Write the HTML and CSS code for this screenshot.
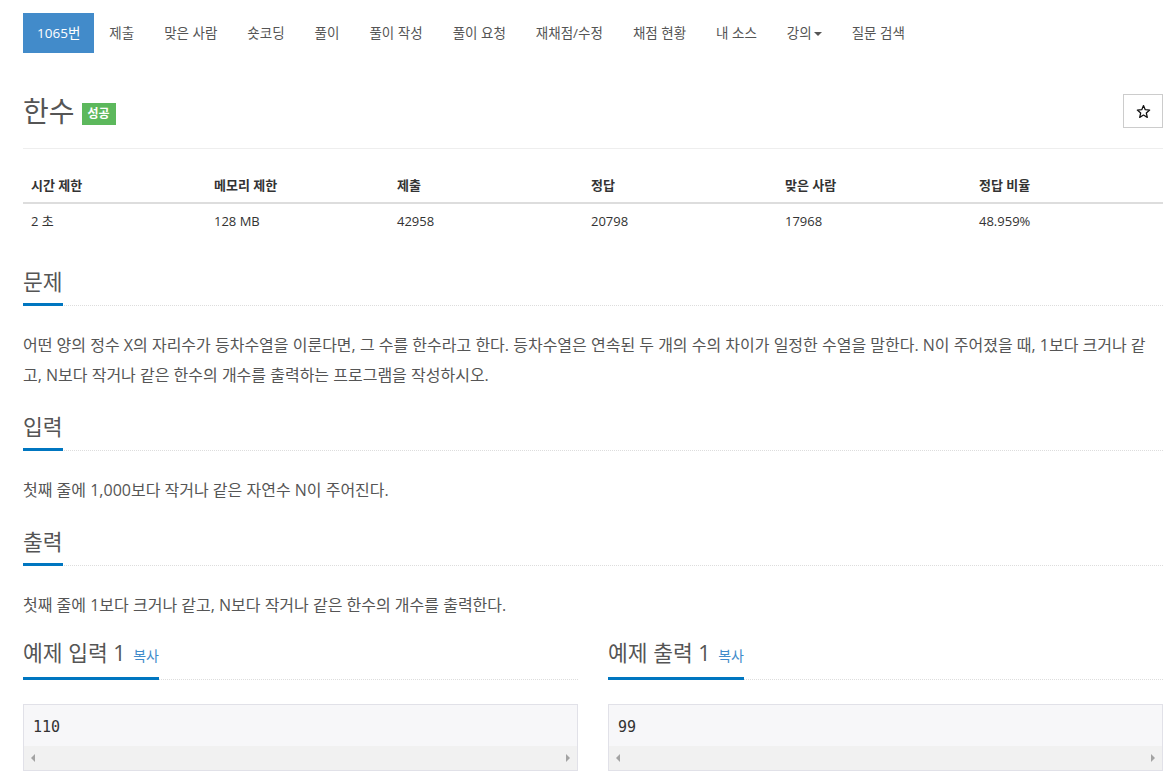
FILE: index.html
```html
<!DOCTYPE html>
<html>
<head>
	<meta charset="utf-8">
	<meta name="viewport" content="width=device-width, initial-scale=1">
	<title>1065번: 한수</title>
<link rel="stylesheet" href="styles.css">
</head>
<body>
<div class="wrapper">
    <ul class="problem-menu">
        <li class="active"><a href="#">1065번</a></li>
        <li><a href="#">제출</a></li>
        <li><a href="#">맞은 사람</a></li>
        <li><a href="#">숏코딩</a></li>
        <li><a href="#">풀이</a></li>
        <li><a href="#">풀이 작성</a></li>
        <li><a href="#">풀이 요청</a></li>
        <li><a href="#">재채점/수정</a></li>
        <li><a href="#">채점 현황</a></li>
        <li><a href="#">내 소스</a></li>
        <li><a href="#">강의<span class="caret"></span></a></li>
        <li><a href="#">질문 검색</a></li>
    </ul>

    <div class="page-header">
        <h1><span id="problem_title">한수</span><span class="label-success">성공</span></h1>
        <button class="star-btn">
            <svg width="15" height="15" viewBox="0 0 24 24"><path d="M12 2.5l2.8 6.6 7.1.6-5.4 4.7 1.6 7-6.1-3.7-6.1 3.7 1.6-7-5.4-4.7 7.1-.6z" fill="none" stroke="#111" stroke-width="2" stroke-linejoin="round"/></svg>
        </button>
    </div>

    <table class="problem-info">
        <thead>
            <tr>
                <th class="w1">시간 제한</th>
                <th class="w1">메모리 제한</th>
                <th class="w2">제출</th>
                <th class="w2">정답</th>
                <th class="w2">맞은 사람</th>
                <th>정답 비율</th>
            </tr>
        </thead>
        <tbody>
            <tr>
                <td>2 초</td>
                <td>128 MB</td>
                <td>42958</td>
                <td>20798</td>
                <td>17968</td>
                <td>48.959%</td>
            </tr>
        </tbody>
    </table>

    <section class="problem-section">
        <div class="headline"><h2>문제</h2></div>
        <div class="problem-text">
            <p>어떤 양의 정수 X의 자리수가 등차수열을 이룬다면, 그 수를 한수라고 한다. 등차수열은 연속된 두 개의 수의 차이가 일정한 수열을 말한다. N이 주어졌을 때, 1보다 크거나 같고, N보다 작거나 같은 한수의 개수를 출력하는 프로그램을 작성하시오.</p>
        </div>
    </section>

    <section class="problem-section">
        <div class="headline"><h2>입력</h2></div>
        <div class="problem-text">
            <p>첫째 줄에 1,000보다 작거나 같은 자연수 N이 주어진다.</p>
        </div>
    </section>

    <section class="problem-section">
        <div class="headline"><h2>출력</h2></div>
        <div class="problem-text">
            <p>첫째 줄에 1보다 크거나 같고, N보다 작거나 같은 한수의 개수를 출력한다.</p>
        </div>
    </section>

    <div class="samples">
        <section class="problem-section">
            <div class="headline"><h2>예제 입력 1 <a class="copy-button" href="#">복사</a></h2></div>
            <div class="sample-box">
                <pre class="sampledata">110</pre>
                <div class="fake-scroll"><span class="arr-left"></span><span class="arr-right"></span></div>
            </div>
        </section>
        <section class="problem-section">
            <div class="headline"><h2>예제 출력 1 <a class="copy-button" href="#">복사</a></h2></div>
            <div class="sample-box">
                <pre class="sampledata">99</pre>
                <div class="fake-scroll"><span class="arr-left"></span><span class="arr-right"></span></div>
            </div>
        </section>
    </div>
</div>
</body>
</html>
```

FILE: styles.css
```css
body {
    margin: 0;
    font-family: "Open Sans", "Noto Sans CJK KR", sans-serif;
    font-size: 13px;
    color: #333;
    background: #fff;
}
a {
    text-decoration: none;
}
.wrapper {
    width: 1140px;
    margin-left: 23px;
    padding-top: 13px;
}

/* top menu */
.problem-menu {
    list-style: none;
    margin: 0;
    padding: 0;
    display: flex;
}
.problem-menu li a {
    display: block;
    height: 40px;
    line-height: 40px;
    padding: 0 15px;
    color: #555;
    font-size: 13.5px;
}
.problem-menu li.active a {
    background-color: #428bca;
    color: #fff;
    padding: 0 14px;
}
.caret {
    display: inline-block;
    width: 0;
    height: 0;
    margin-left: 2px;
    vertical-align: middle;
    border-top: 4px solid #555;
    border-left: 4px solid transparent;
    border-right: 4px solid transparent;
}

/* title */
.page-header {
    margin-top: 41px;
    padding-bottom: 20px;
    border-bottom: 1px solid #eee;
    display: flex;
    justify-content: space-between;
    align-items: flex-start;
}
.page-header h1 {
    margin: 0;
    font-size: 28px;
    font-weight: 400;
    line-height: 34px;
    color: #555;
    display: flex;
    align-items: center;
}
.label-success {
    display: inline-block;
    margin-left: 7px;
    margin-top: 6px;
    padding: 0 6px;
    height: 22px;
    line-height: 22px;
    background-color: #5cb85c;
    color: #fff;
    font-size: 12px;
    font-weight: 700;
}
.star-btn {
    width: 40px;
    height: 34px;
    background: #fff;
    border: 1px solid #ccc;
    padding: 0;
    display: flex;
    align-items: center;
    justify-content: center;
}

/* info table */
.problem-info {
    width: 100%;
    margin-top: 19px;
    border-collapse: collapse;
}
.problem-info th,
.problem-info td {
    text-align: left;
    padding: 8px;
    line-height: 18px;
}
.problem-info th {
    font-weight: 700;
    border-bottom: 2px solid #ddd;
}
.w1 {
    width: 167px;
}
.w2 {
    width: 178px;
}

/* sections */
.problem-section {
    margin-top: 30px;
}
.problem-section + .problem-section {
    margin-top: 23px;
}
.headline {
    border-bottom: 1px dotted #ddd;
}
.headline h2 {
    display: inline-block;
    margin: 0 0 -1px 0;
    padding-bottom: 7px;
    font-size: 21.5px;
    font-weight: 400;
    line-height: 28px;
    color: #555;
    border-bottom: 3px solid #0076c0;
}
.copy-button {
    font-size: 14px;
    color: #428bca;
    margin-left: 2px;
}
.problem-text p {
    margin: 24px 0 0 0;
    font-size: 16px;
    line-height: 30px;
    color: #555;
}

/* samples */
.samples {
    display: grid;
    grid-template-columns: 1fr 1fr;
    column-gap: 30px;
    margin-top: 19px;
}
.samples .problem-section {
    margin-top: 0;
}
.sample-box {
    margin-top: 24px;
    border: 1px solid #e1e1e8;
    background-color: #f7f7f9;
}
.sampledata {
    margin: 0;
    padding: 12px 9px 9px;
    font-family: "DejaVu Sans Mono", monospace;
    font-size: 15px;
    line-height: 20px;
    color: #333;
}
.fake-scroll {
    height: 24px;
    background-color: #f1f1f1;
    display: flex;
    justify-content: space-between;
    align-items: center;
    padding: 0 7px;
}
.arr-left {
    width: 0;
    height: 0;
    border-top: 4px solid transparent;
    border-bottom: 4px solid transparent;
    border-right: 4px solid #a3a3a3;
}
.arr-right {
    width: 0;
    height: 0;
    border-top: 4px solid transparent;
    border-bottom: 4px solid transparent;
    border-left: 4px solid #a3a3a3;
}
```
